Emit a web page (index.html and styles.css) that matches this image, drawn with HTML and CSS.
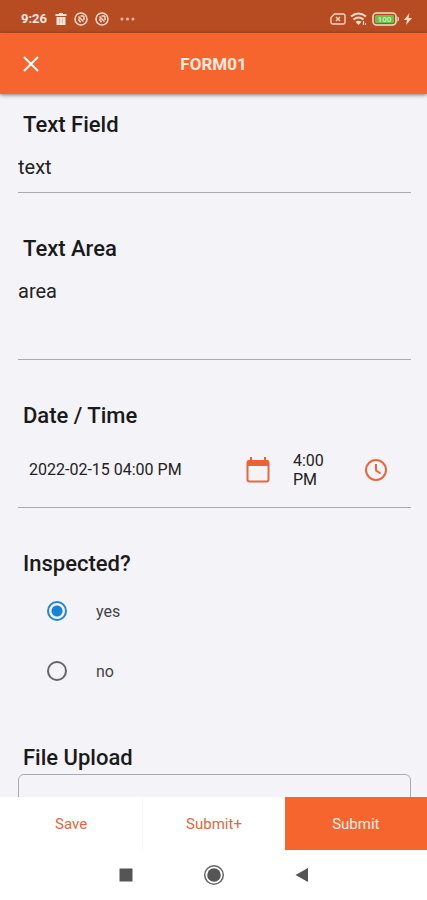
FILE: index.html
```html
<!DOCTYPE html>
<html lang="en">
	<head>
		<title>FORM01</title>
		<meta charset="UTF-8" />
		<meta name="viewport" content="width=device-width, initial-scale=1" />
		<link rel="stylesheet" href="styles.css">
	</head>
	<body>
		<div class="status">
			<div class="statusLeft">
				<span class="clock">9:26</span>
				<svg width="12" height="14" viewBox="0 0 12 14"><path d="M0.500 2h3.500V1h4v1h3.500v2H0.500zM1.500 5h9v8H1.500z" fill="#fbe6dc"/><path d="M4.500 6.500v5M7.500 6.500v5" stroke="#e3b09a"/></svg>
				<svg width="14" height="14" viewBox="0 0 14 14" fill="none" stroke="#fbdccd"><circle cx="7" cy="7" r="6" stroke-width="1.500"/><path d="M4.500 4.500l5 5M5 9V6.500M6.500 4H9a1 1 0 0 1 1 1v3M5 9.500h2" stroke-width="1.500"/></svg>
				<svg width="14" height="14" viewBox="0 0 14 14" fill="none" stroke="#fbdccd"><circle cx="7" cy="7" r="6" stroke-width="1.500"/><path d="M4.500 4.500l5 5M5 9V6.500M6.500 4H9a1 1 0 0 1 1 1v3M5 9.500h2" stroke-width="1.500"/></svg>
				<svg class="dots" width="16" height="4" viewBox="0 0 16 4" fill="#f3c3ae"><circle cx="2" cy="2" r="1.500"/><circle cx="7.500" cy="2" r="1.500"/><circle cx="13" cy="2" r="1.500"/></svg>
			</div>
			<div class="statusRight">
				<svg width="16" height="12" viewBox="0 0 16 12" fill="none" stroke="#f8d3c2"><path d="M4.500 1H13q2 0 2 2v6q0 2-2 2H3q-2 0-2-2V4.500z" stroke-width="1.400"/><path d="M6 4l4 4M10 4L6 8" stroke-width="1.500"/></svg>
				<svg width="18" height="14" viewBox="0 0 18 14" fill="none" stroke="#fbdccd" stroke-width="2"><path d="M1 4.500q7.500-6 15 0M3.500 7.500q5-4 10 0"/><path d="M8.500 13L5.500 9.800q3-2 6 0z" fill="#fbdccd" stroke="none"/><path d="M13.500 9v4M15.500 11v2" stroke-width="1.200"/></svg>
				<svg class="battery" width="28" height="14" viewBox="0 0 28 14"><rect x="1" y="1" width="23" height="12" rx="3.500" fill="none" stroke="#f8dccb" stroke-width="1.600"/><rect x="3" y="3" width="19" height="8" rx="1.500" fill="#6cc04a"/><path d="M25.500 4.500q1.500 0 1.500 2.500t-1.500 2.500z" fill="#f8dccb"/><text x="12.500" y="10" text-anchor="middle">100</text></svg>
				<svg width="8" height="12" viewBox="0 0 8 12"><path d="M5.500 0L0 7h3L2 12l6-7H4.500z" fill="#fbe0d2"/></svg>
			</div>
		</div>

		<header class="appBar">
			<button type="button" class="close" aria-label="Close">
				<svg width="16" height="16" viewBox="0 0 16 16"><path d="M1 1l14 14M15 1L1 15" stroke="#fff" stroke-width="2"/></svg>
			</button>
			<h1>FORM01</h1>
		</header>

		<form class="content" id="form">
			<div class="field">
				<label for="textField">Text Field</label>
				<input class="line" type="text" id="textField" value="text" />
			</div>
			<div class="field">
				<label for="textArea">Text Area</label>
				<textarea class="line area" id="textArea">area</textarea>
			</div>
			<div class="field">
				<label for="date">Date / Time</label>
				<div class="dateTime">
					<input class="date" type="text" id="date" value="2022-02-15 04:00 PM" />
					<button type="button" aria-label="Pick date">
						<svg width="24" height="26" viewBox="0 0 24 26"><rect x="1.500" y="4" width="21" height="20.500" rx="2" fill="none" stroke="#e8683c" stroke-width="2"/><path d="M1 9V5q0-2 2-2h1V0h2v3h12V0h2v3h1q2 0 2 2v4z" fill="#ee6133"/></svg>
					</button>
					<textarea class="time" rows="2" aria-label="Time">4:00 PM</textarea>
					<button type="button" aria-label="Pick time">
						<svg width="24" height="24" viewBox="0 0 24 24" fill="none" stroke="#e8683c" stroke-width="2"><circle cx="12" cy="12" r="10"/><path d="M12 6v6.500l4.500 3"/></svg>
					</button>
				</div>
			</div>
			<fieldset class="field">
				<legend>Inspected?</legend>
				<div class="radios">
					<label class="radio"><input type="radio" name="inspected" value="yes" checked />yes</label>
					<label class="radio"><input type="radio" name="inspected" value="no" />no</label>
				</div>
			</fieldset>
			<div class="field">
				<label for="file">File Upload</label>
				<div class="upload">
					<input type="file" id="file" />
				</div>
			</div>
		</form>

		<div class="actions">
			<button type="button">Save</button>
			<button type="button">Submit+</button>
			<button type="submit" form="form" class="primary">Submit</button>
		</div>

		<nav class="systemNav">
			<button type="button" aria-label="Recent apps">
				<svg width="22" height="22" viewBox="0 0 22 22"><rect x="4.500" y="4.500" width="13" height="13" fill="#555"/></svg>
			</button>
			<button type="button" aria-label="Home">
				<svg width="22" height="22" viewBox="0 0 22 22"><circle cx="11" cy="11" r="9.300" fill="none" stroke="#666" stroke-width="1.500"/><circle cx="11" cy="11" r="6.800" fill="#555"/></svg>
			</button>
			<button type="button" aria-label="Back">
				<svg width="22" height="22" viewBox="0 0 22 22"><path d="M4.500 11L17 4v14z" fill="#555"/></svg>
			</button>
		</nav>
	</body>
</html>
```
FILE: styles.css
```css
* {
	box-sizing: border-box;
}
html, body {
	height: 100%;
	margin: 0px;
}
body {
	display: flex;
	flex-direction: column;
	font-family: Roboto, "Liberation Sans", sans-serif;
	font-size: 16px;
	color: #222;
	background: #f4f3f8;
}
button, input, textarea {
	margin: 0px;
	padding: 0px;
	border: 0px;
	font: inherit;
	color: inherit;
	background: none;
	outline: none;
}
button {
	cursor: pointer;
}
svg {
	display: block;
}

/* Top bars */
.status {
	display: flex;
	justify-content: space-between;
	align-items: center;
	height: 33px;
	padding: 4px 15px 0 21px;
	background: #b74c22;
}
.statusLeft, .statusRight {
	display: flex;
	align-items: center;
	gap: 7px;
}
.statusRight {
	gap: 4px;
}
.clock {
	margin-right: 1px;
	font-size: 13px;
	font-weight: 700;
	color: #fdeae2;
}
.dots {
	margin-left: 4px;
}
.battery text {
	font-size: 8px;
	font-weight: 700;
	fill: #c9efac;
}
.appBar {
	display: grid;
	grid-template-columns: 62px 1fr 62px;
	align-items: center;
	height: 61px;
	background: #f7652f;
	box-shadow: 0 1px 4px rgba(0, 0, 0, 0.5);
	z-index: 1;
}
.close {
	display: flex;
	justify-content: center;
	padding: 12px 0;
}
.appBar h1 {
	margin: 0px;
	font-size: 17px;
	font-weight: 700;
	text-align: center;
	color: #ffe9df;
}

/* Form */
.content {
	flex: 1;
	min-height: 0;
	padding: 17px 16px 0 18px;
	overflow-y: auto;
	scrollbar-width: none;
}
.field {
	display: flex;
	flex-direction: column;
	min-width: 0;
	margin: 0 0 42px;
	padding: 0px;
	border: 0px;
}
.field > label, legend {
	padding: 0 5px;
	font-size: 22px;
	font-weight: 500;
	line-height: 28px;
	color: #1a1a1a;
}
.line {
	width: 100%;
	height: 54px;
	padding: 14px 0 11px;
	border-bottom: 1px solid #aaa9ae;
	font-size: 20px;
	line-height: 28px;
}
.area {
	height: 97px;
	resize: none;
}
.dateTime {
	display: flex;
	align-items: center;
	height: 78px;
	padding: 2px 23px 0 11px;
	border-bottom: 1px solid #aaa9ae;
}
.date {
	flex: 1;
	min-width: 0;
}
.time {
	width: 46px;
	margin: 0 25px 0 23px;
	line-height: 19px;
	resize: none;
	overflow: hidden;
}
.radios {
	padding: 3px 0 1px;
}
.radio {
	display: flex;
	align-items: center;
	gap: 29px;
	height: 60px;
	padding-left: 29px;
	color: #444;
}
.radio input {
	appearance: none;
	width: 20px;
	height: 20px;
	border: 2px solid #666;
	border-radius: 50%;
}
.radio input:checked {
	border-color: #2585d0;
	background: radial-gradient(#1583dc 5px, transparent 6px);
}
.upload {
	height: 120px;
	margin-top: 2px;
	padding: 44px 16px;
	border: 1px solid #aaa9ae;
	border-radius: 6px;
}

/* Bottom bars */
.actions {
	display: grid;
	grid-template-columns: repeat(3, 1fr);
	height: 53px;
	background: #fff;
}
.actions button {
	font-size: 15px;
	color: #e0673f;
}
.actions button + button {
	border-left: 1px solid #f9f7f7;
}
.actions .primary {
	border: 0px;
	color: #fff0e9;
	background: #f7652f;
}
.systemNav {
	display: flex;
	justify-content: center;
	gap: 66px;
	height: 50px;
	padding-top: 3px;
	background: #fff;
}
.systemNav button {
	padding: 0 0 4px;
}
```
